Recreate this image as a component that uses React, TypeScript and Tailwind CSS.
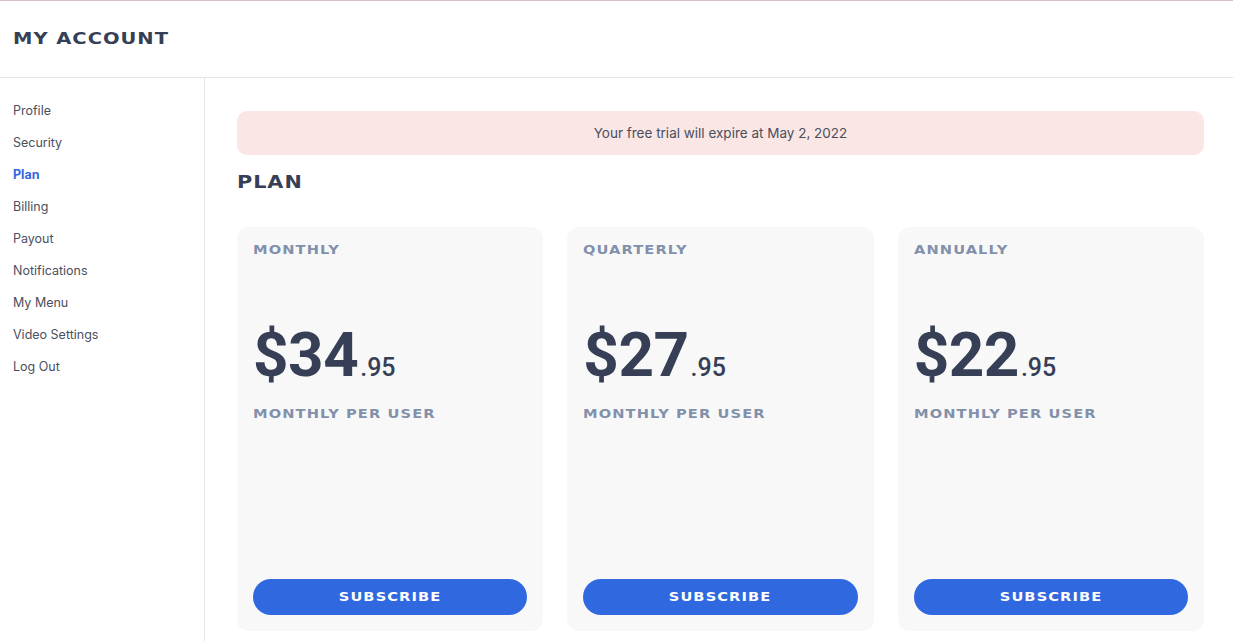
import React from "react";

const wide = { fontFamily: '"DejaVu Sans", Verdana, sans-serif' };

const navItems = ["Profile", "Security", "Plan", "Billing", "Payout", "Notifications", "My Menu", "Video Settings", "Log Out"];

const plans = [
  { label: "MONTHLY", dollars: "$34", cents: ".95" },
  { label: "QUARTERLY", dollars: "$27", cents: ".95" },
  { label: "ANNUALLY", dollars: "$22", cents: ".95" },
];

function Wide({ children, className = "" }: { children: React.ReactNode; className?: string }) {
  return (
    <span className={`inline-block scale-x-[1.22] ${className}`} style={wide}>
      {children}
    </span>
  );
}

export default function App() {
  return (
    <div className="w-[1233px] h-[641px] bg-white overflow-hidden flex flex-col border-t border-[#d9c0c6]" style={{ fontFamily: 'Inter, "Noto Sans", sans-serif' }}>
      <header className="h-[77px] shrink-0 flex items-center px-[13px] border-b border-[#e4e4e6]">
        <h1 className="text-[16px] font-bold tracking-[0.8px] text-[#363f55] leading-none mt-[-2px]">
          <Wide className="origin-left">MY ACCOUNT</Wide>
        </h1>
      </header>
      <div className="flex flex-1 min-h-0">
        <aside className="w-[205px] shrink-0 border-r border-[#e4e4e6] pt-[17px] pl-[13px]">
          <ul className="flex flex-col">
            {navItems.map((item) => (
              <li
                key={item}
                className={`h-[32px] flex items-center text-[12.5px] ${item === "Plan" ? "font-bold text-[#3467e0]" : "text-[#4a5060]"}`}
              >
                {item}
              </li>
            ))}
          </ul>
        </aside>
        <main className="flex-1 pl-[32px] pr-[29px] pt-[33px] flex flex-col">
          <div className="h-[44px] rounded-[10px] bg-[#fae6e4] flex items-center justify-center text-[13.5px] text-[#4b4f5c]">
            Your free trial will expire at May 2, 2022
          </div>
          <h2 className="mt-[19px] text-[17px] font-bold tracking-[0.8px] text-[#363f55] leading-none">
            <Wide className="origin-left">PLAN</Wide>
          </h2>
          <div className="grid grid-cols-3 gap-[24px] mt-[36px] flex-1 pb-[10px]">
            {plans.map((p) => (
              <div key={p.label} className="bg-[#f8f8f9] rounded-[12px] px-[16px] pt-[17px] pb-[16px] flex flex-col">
                <div className="text-[12px] font-bold tracking-[0.9px] text-[#8290aa] leading-none">
                  <Wide className="origin-left">{p.label}</Wide>
                </div>
                <div className="mt-[68px] flex items-baseline text-[#363f55] leading-none" style={{ fontFamily: 'Roboto, "Noto Sans", sans-serif' }}>
                  <span className="text-[62px] font-bold tracking-[-0.5px]">{p.dollars}</span>
                  <span className="text-[25px] font-medium ml-[2px]">{p.cents}</span>
                </div>
                <div className="mt-[22px] text-[12px] font-bold tracking-[0.9px] text-[#8290aa] leading-none">
                  <Wide className="origin-left">MONTHLY PER USER</Wide>
                </div>
                <div className="flex-1" />
                <button className="h-[36px] w-full rounded-full bg-[#3068e0] text-white text-[12px] font-bold tracking-[0.9px] flex items-center justify-center">
                  <Wide className="origin-center">SUBSCRIBE</Wide>
                </button>
              </div>
            ))}
          </div>
        </main>
      </div>
    </div>
  );
}
